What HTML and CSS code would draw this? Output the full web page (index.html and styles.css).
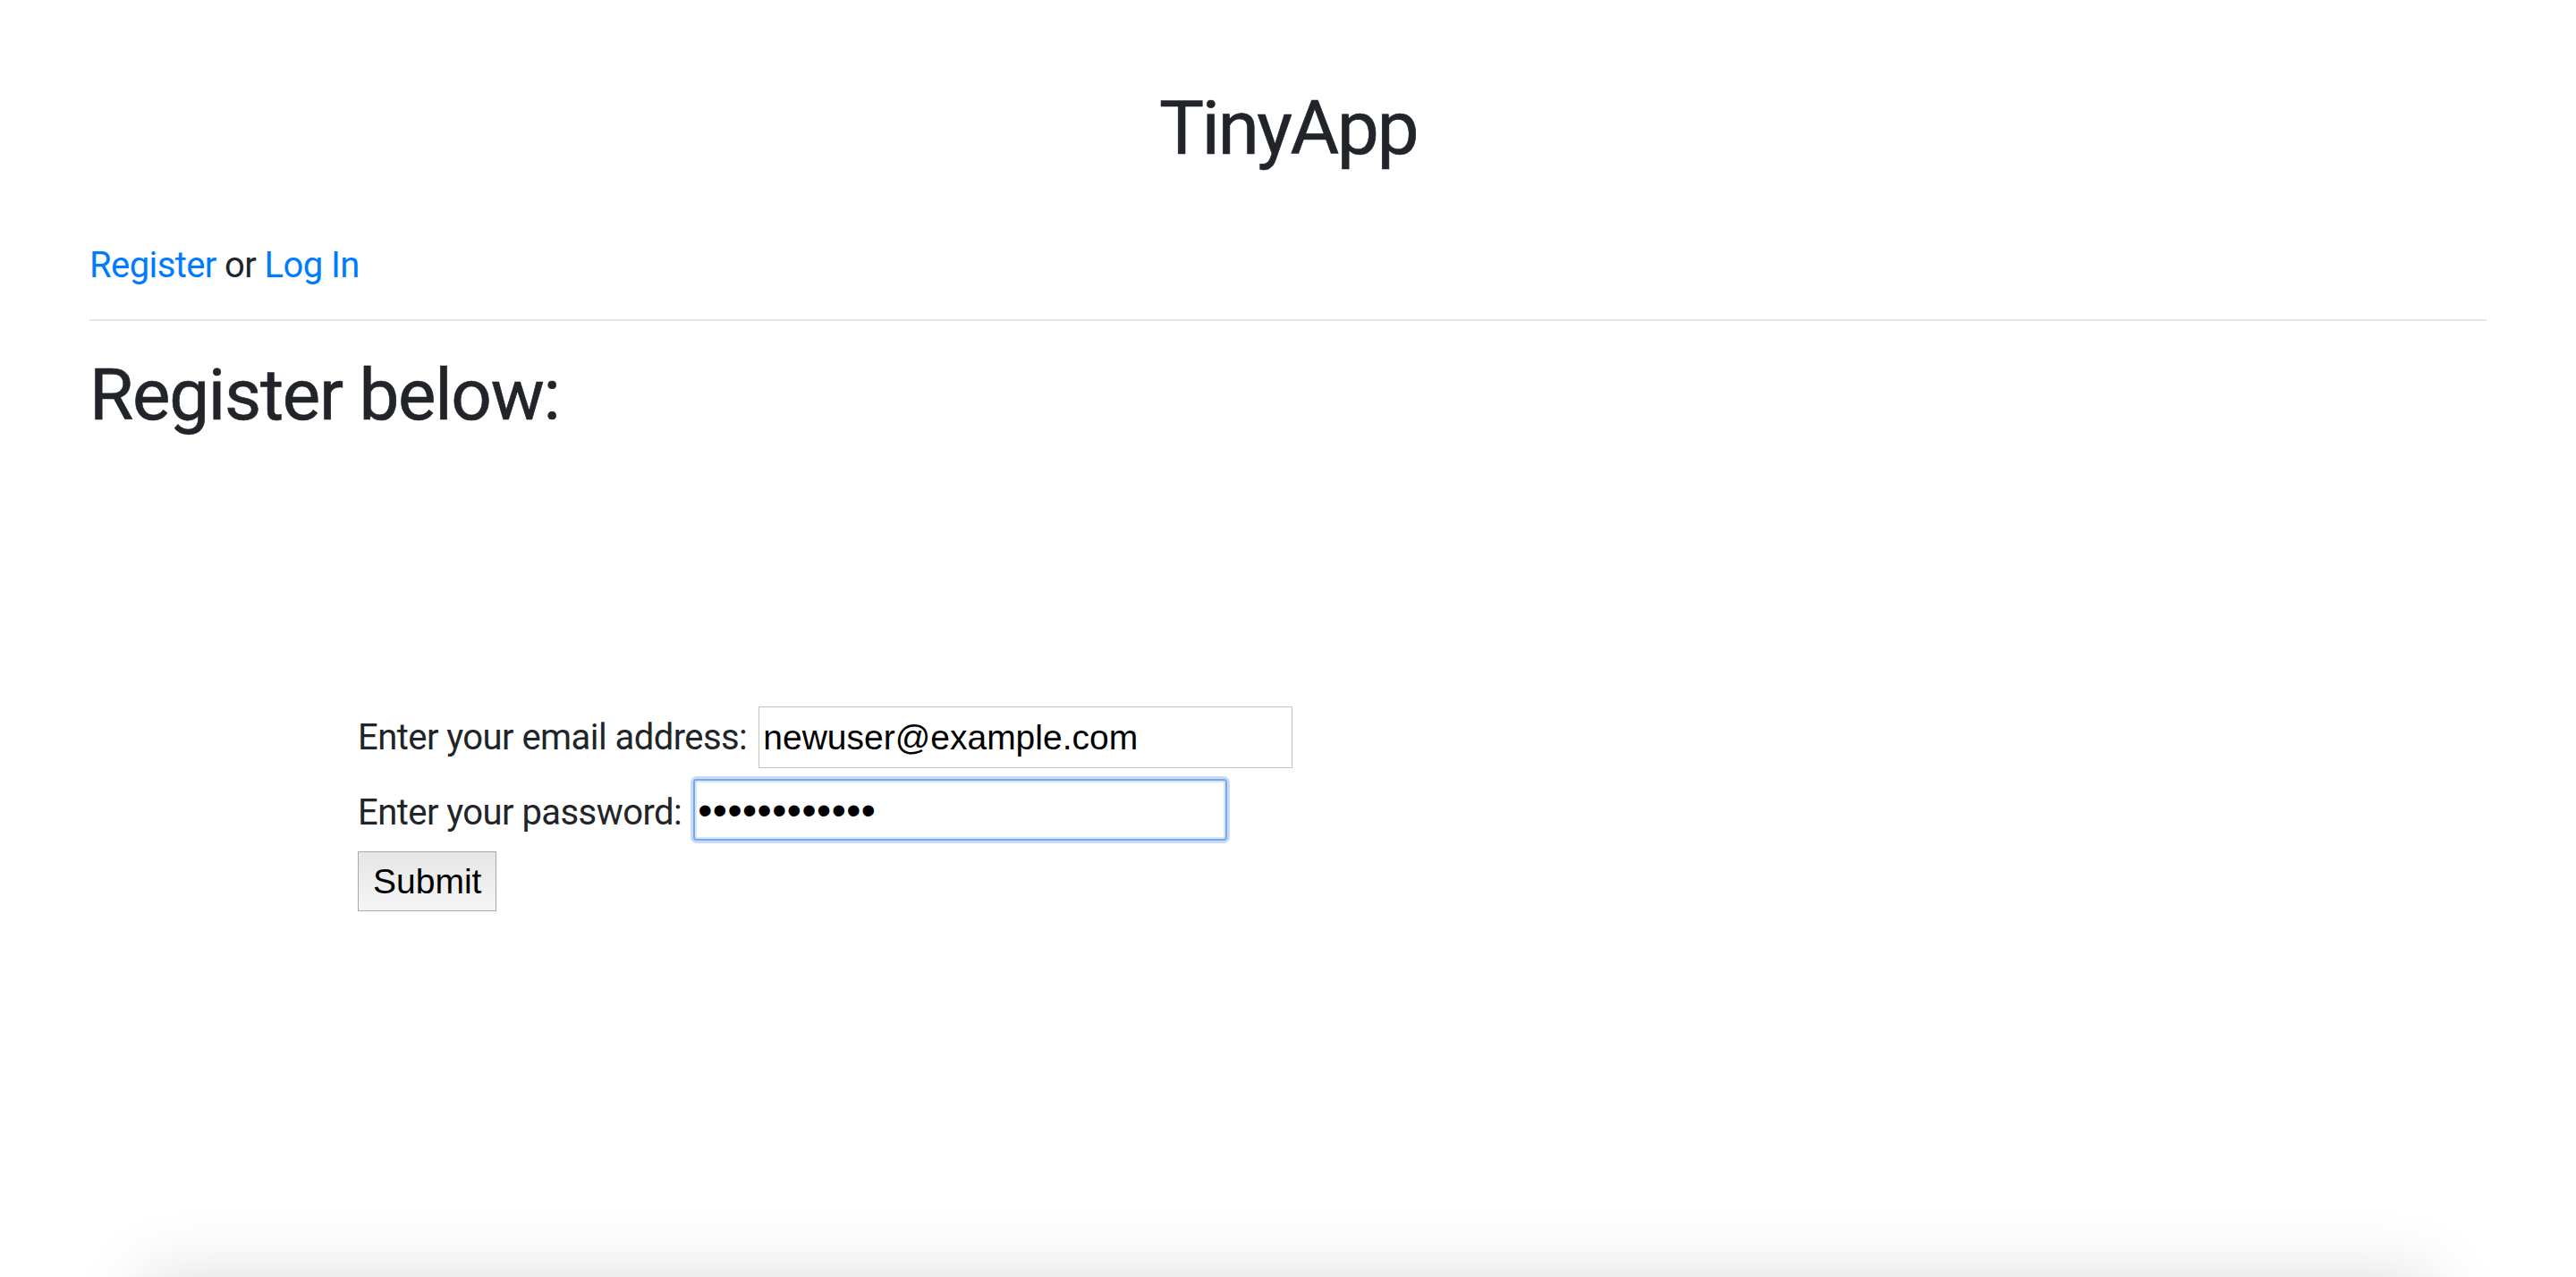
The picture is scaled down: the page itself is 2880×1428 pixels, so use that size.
FILE: index.html
```html
<!DOCTYPE html>
<html lang="en">
<head>
<meta charset="utf-8">
<title>TinyApp</title>
<link rel="stylesheet" href="styles.css">
</head>
<body>
  <header class="site-header">
    <h1 class="brand">TinyApp</h1>
    <nav class="auth-nav"><a href="#" class="nav-link">Register</a> or <a href="#" class="nav-link">Log In</a></nav>
    <hr class="divider">
  </header>
  <main class="content">
    <h2 class="page-title">Register below:</h2>
    <form class="register-form">
      <div class="form-row">
        <label class="form-label" for="email">Enter your email address:</label>
        <input class="text-input" id="email" type="email" value="newuser@example.com">
      </div>
      <div class="form-row">
        <label class="form-label" for="password">Enter your password:</label>
        <input class="text-input password-input is-focused" id="password" type="password" value="password1234">
      </div>
      <div class="form-row">
        <button class="submit-btn" type="submit">Submit</button>
      </div>
    </form>
  </main>
  <div class="bottom-peek"></div>
</body>
</html>
```

FILE: styles.css
```css
html, body {
  margin: 0;
  padding: 0;
  background: #ffffff;
}

body {
  font-family: "Roboto", "Inter", "Liberation Sans", sans-serif;
  color: #212529;
  padding: 0 100px;
  overflow: hidden;
  height: 1428px;
  box-sizing: border-box;
}

.site-header {
  padding-top: 94px;
}

.brand {
  margin: 0;
  font-size: 84px;
  line-height: 100px;
  font-weight: 400;
  text-align: center;
  letter-spacing: -0.03em;
  -webkit-text-stroke: 0.6px #212529;
}

.auth-nav {
  margin-top: 78px;
  font-size: 40px;
  line-height: 50px;
  letter-spacing: -0.015em;
}

.nav-link {
  color: #007bff;
  text-decoration: none;
}

.divider {
  margin: 35px 0 0;
  border: 0;
  border-top: 2px solid #e5e5e5;
  height: 0;
}

.page-title {
  margin: 35px 0 0;
  font-size: 80px;
  line-height: 96px;
  font-weight: 400;
  letter-spacing: -0.016em;
  -webkit-text-stroke: 0.6px #212529;
}

.register-form {
  margin: 300px 0 0 300px;
  display: flex;
  flex-direction: column;
  gap: 12px;
}

.form-row {
  display: flex;
  align-items: baseline;
  gap: 13px;
}

.form-label {
  font-size: 40px;
  white-space: nowrap;
  letter-spacing: -0.014em;
}

.text-input {
  box-sizing: border-box;
  width: 597px;
  height: 69px;
  padding: 0 4px;
  margin: 0;
  border: 1px solid #c4c4c4;
  font-family: "Liberation Sans", Arial, sans-serif;
  font-size: 39px;
  color: #000;
  background: #fff;
  outline: none;
}

.password-input {
  font-size: 46px;
  letter-spacing: 0.5px;
}

.text-input.is-focused {
  border: 2px solid #7aa6ee;
  border-radius: 4px;
  box-shadow: 0 0 0 3px #c6dbf8, inset 0 0 0 2px #d6e6fb;
  padding-left: 3px;
}

.submit-btn {
  box-sizing: border-box;
  height: 67px;
  padding: 0 16px;
  margin: 0;
  border: 1px solid #a9a9a9;
  background: linear-gradient(#e6e6e6, #f5f5f5);
  font-family: "Liberation Sans", Arial, sans-serif;
  font-size: 39px;
  color: #000;
}

.bottom-peek {
  position: fixed;
  left: 160px;
  right: 160px;
  bottom: -200px;
  height: 200px;
  background: #fff;
  box-shadow: 0 0 80px rgba(0, 0, 0, 0.14);
}
```
